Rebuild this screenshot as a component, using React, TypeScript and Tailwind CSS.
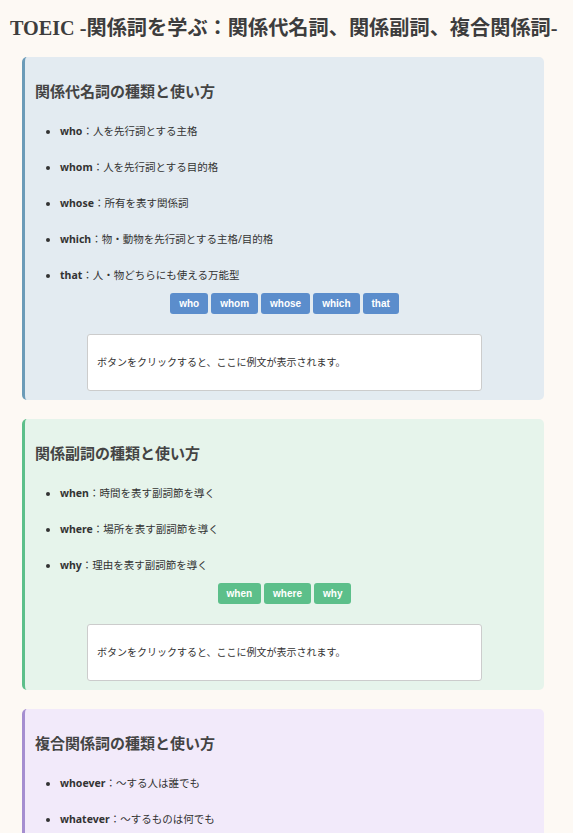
import React, { useState } from "react";

type Item = { term: string; desc: string; example: string };

type Section = {
  title: string;
  box: string;
  btn: string;
  items: Item[];
};

const sections: Section[] = [
  {
    title: "関係代名詞の種類と使い方",
    box: "bg-[#e3ebf1] border-[#6b9bb8]",
    btn: "bg-[#5b8dcc]",
    items: [
      { term: "who", desc: "人を先行詞とする主格", example: "The man who lives next door is a doctor." },
      { term: "whom", desc: "人を先行詞とする目的格", example: "The woman whom I met yesterday is my teacher." },
      { term: "whose", desc: "所有を表す関係詞", example: "I have a friend whose father is a pilot." },
      { term: "which", desc: "物・動物を先行詞とする主格/目的格", example: "This is the book which I bought last week." },
      { term: "that", desc: "人・物どちらにも使える万能型", example: "This is the best movie that I have ever seen." },
    ],
  },
  {
    title: "関係副詞の種類と使い方",
    box: "bg-[#e6f4eb] border-[#5cbf8a]",
    btn: "bg-[#5cbf8a]",
    items: [
      { term: "when", desc: "時間を表す副詞節を導く", example: "I remember the day when we first met." },
      { term: "where", desc: "場所を表す副詞節を導く", example: "This is the house where I was born." },
      { term: "why", desc: "理由を表す副詞節を導く", example: "Tell me the reason why you were late." },
    ],
  },
  {
    title: "複合関係詞の種類と使い方",
    box: "bg-[#f2eafa] border-[#a58ed0]",
    btn: "bg-[#a58ed0]",
    items: [
      { term: "whoever", desc: "～する人は誰でも", example: "Whoever comes first will get a prize." },
      { term: "whatever", desc: "～するものは何でも", example: "You can eat whatever you like." },
      { term: "whichever", desc: "～するどちらでも", example: "Take whichever you want." },
      { term: "whenever", desc: "～するときはいつでも", example: "Call me whenever you need help." },
    ],
  },
];

function Block({ s }: { s: Section }) {
  const [text, setText] = useState("ボタンをクリックすると、ここに例文が表示されます。");
  return (
    <section className={`ml-[22px] w-[522px] rounded-[5px] border-l-[3px] px-[10px] pt-[23px] pb-[9px] mb-[19px] ${s.box}`}>
      <h2 className="text-[15px] leading-[22px] font-bold text-[#444]">{s.title}</h2>
      <ul className="mt-[21px] pl-[25px] list-disc text-[10.5px] leading-[16px] text-[#333]">
        {s.items.map((it) => (
          <li key={it.term} className="mb-[20px] last:mb-0">
            <span className="font-bold">{it.term}</span>：{it.desc}
          </li>
        ))}
      </ul>
      <div className="mt-[10px] flex justify-center gap-[3px]">
        {s.items.map((it) => (
          <button
            key={it.term}
            onClick={() => setText(it.example)}
            className={`h-[21px] px-[9px] rounded-[3px] text-white text-[10px] font-bold font-['Liberation_Sans',Arial,sans-serif] ${s.btn}`}
          >
            {it.term}
          </button>
        ))}
      </div>
      <div className="mt-[20px] mx-auto w-[395px] h-[57px] bg-white border border-[#ccc] rounded-[3px] px-[9px] flex items-center text-[10px] text-[#333]">
        {text}
      </div>
    </section>
  );
}

export default function App() {
  return (
    <div className="min-h-screen bg-[#fdf9f4] font-['Noto_Sans','Noto_Sans_CJK_JP',sans-serif] pb-[10px]">
      <h1 className="pl-[10px] pt-[14px] mb-[15px] text-[20.2px] leading-[28px] font-bold text-[#3d3d3d] font-['Liberation_Serif','Noto_Sans_CJK_JP',serif]">
        TOEIC -関係詞を学ぶ：関係代名詞、関係副詞、複合関係詞-
      </h1>
      {sections.map((s) => (
        <Block key={s.title} s={s} />
      ))}
    </div>
  );
}
